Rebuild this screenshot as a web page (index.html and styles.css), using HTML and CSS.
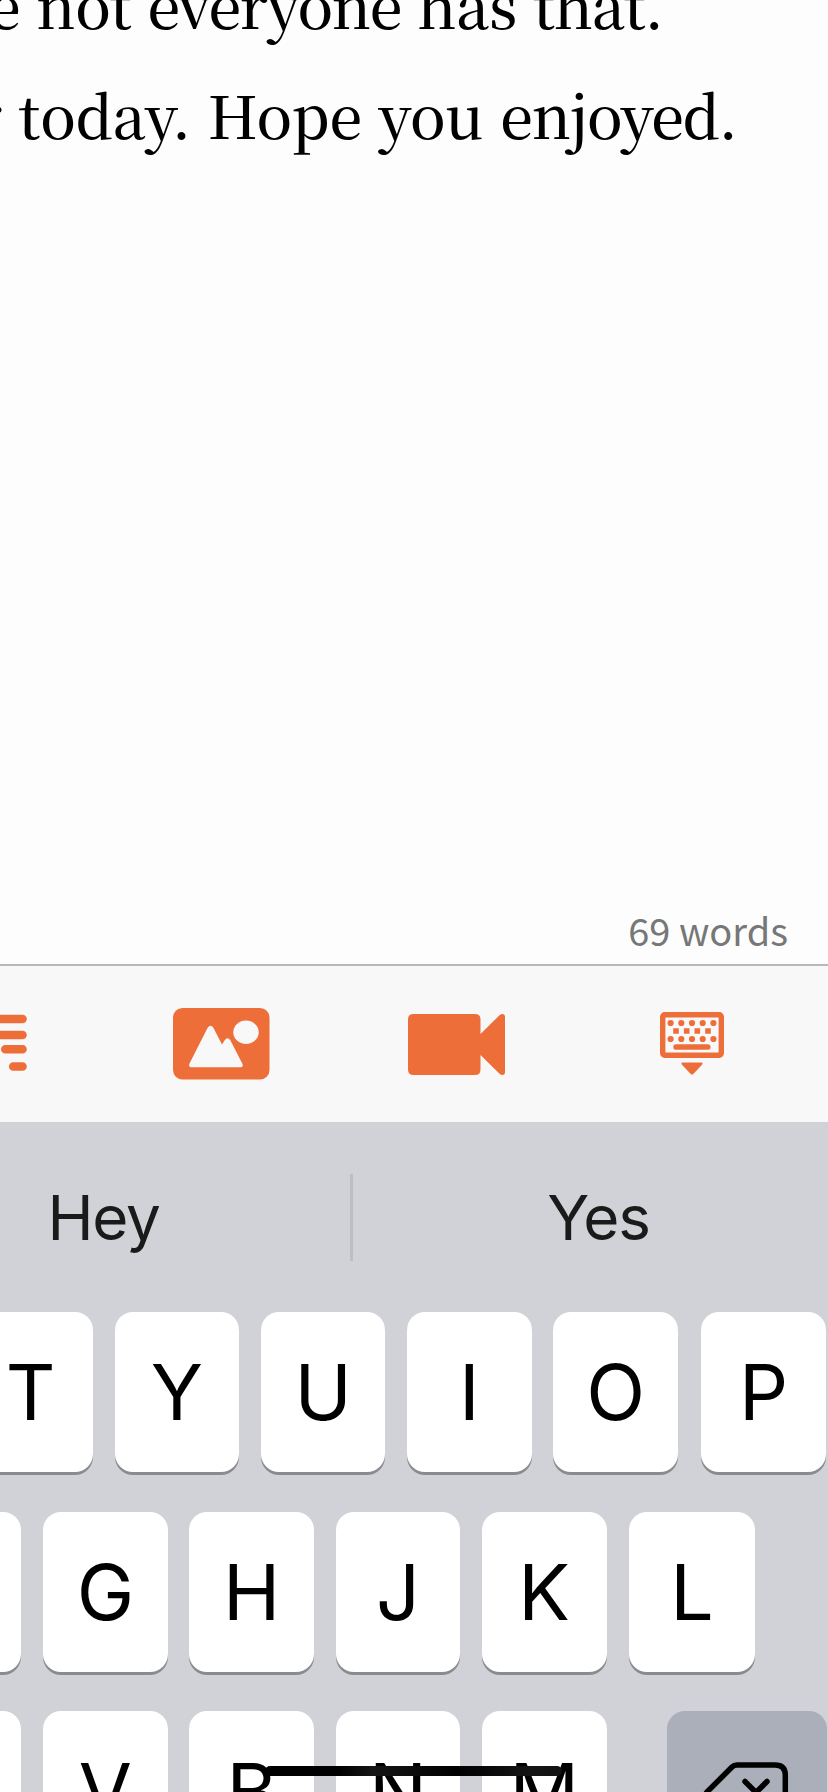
FILE: index.html
```html
<!DOCTYPE html>
<html lang="en">
<head>
<meta charset="utf-8">
<title>Story editor</title>
<link rel="stylesheet" href="styles.css">
</head>
<body>
<div class="screen">
  <main class="editor">
    <p class="line line-first">e not <span class="snug">everyone</span> has <span class="tight">that.</span></p>
    <p class="line line-last">r today. Hope you <span class="tight">enjoyed.</span></p>
    <div class="count">69 words</div>
  </main>
  <div class="toolbar">
    <svg class="icon-align" width="28" height="60" viewBox="0 0 28 60"><path d="M-10 5H22.500M-10 21H22.500M5.300 35.300H22.500M13.200 52.500H22.500" stroke="#ee6e3a" stroke-width="8.600" stroke-linecap="round"/></svg>
    <svg class="icon-image" width="97" height="72" viewBox="0 0 97 72"><rect width="96.500" height="71.500" rx="9.500" fill="#ee6e3a"/><path d="M16.500 55.500 34.500 20q3-4.500 6 0L49 36.500l2.500-4q3-4.500 6 0L69.500 56q1 3.300-2 3.300H18.500q-3.500 0-2-3.800Z" fill="#f8f8f8"/><ellipse cx="73" cy="24.300" rx="12.700" ry="11.700" fill="#f8f8f8"/></svg>
    <svg class="icon-video" width="97" height="62" viewBox="0 0 97 62"><path d="M5.500 0H67q5.500 0 5.500 5.500V20L91.500 1.200Q93 0 94.500 0 97 0 97 3V58q0 3-2.500 3-1.500 0-3-1.200L72.500 41V55.500q0 5.500-5.500 5.500H5.500Q0 61 0 55.500V5.500Q0 0 5.500 0Z" fill="#ee6e3a"/></svg>
    <svg class="icon-keyboard" width="64" height="64" viewBox="0 0 64 64" fill="#ee6e3a"><rect x="2.700" y="2.700" width="58.600" height="40.600" rx="2" fill="none" stroke="#ee6e3a" stroke-width="5.400"/><g stroke="#ee6e3a" stroke-width="6.200" stroke-linecap="round"><path d="M10.600 11h.01M21.300 11h.01M32 11h.01M42.700 11h.01M53.400 11h.01M10.600 27h.01M21.300 27h.01M32 27h.01M42.700 27h.01M53.400 27h.01"/></g><path d="M13.200 16.200h5.600v5.600h-5.600zM23.900 16.200h5.600v5.600h-5.600zM34.500 16.200h5.600v5.600h-5.600zM45.200 16.200h5.600v5.600h-5.600z"/><rect x="13.300" y="32.200" width="37.200" height="5.600" rx="2.500"/><path d="M22.500 50.500h19q2.200.5.300 2.500l-8.500 9q-1.300 1-2.600 0l-8.500-9q-1.900-2 .3-2.500Z"/></svg>
  </div>
  <section class="keyboard">
    <div class="suggestions">
      <div class="suggestion">Hey</div>
      <div class="divider"></div>
      <div class="suggestion suggestion-last">Yes</div>
    </div>
    <div class="row row-top"><div class="key">T</div><div class="key">Y</div><div class="key">U</div><div class="key">I</div><div class="key">O</div><div class="key key-wide">P</div></div>
    <div class="row row-home"><div class="key"></div><div class="key">G</div><div class="key">H</div><div class="key">J</div><div class="key">K</div><div class="key key-wide">L</div></div>
    <div class="row row-bottom"><div class="key"></div><div class="key">V</div><div class="key">B</div><div class="key">N</div><div class="key">M</div><div class="key key-delete"><svg width="94" height="64" viewBox="0 0 94 64" fill="none" stroke="#000" stroke-width="5.500" stroke-linecap="round" stroke-linejoin="round"><path d="M37 3H75q10.300 0 10.300 10V51q0 10-10.300 10H37q-3 0-5-2L7 34q-2-2 0-4L32 5q2-2 5-2ZM45 19.500l22 22M67 19.500l-22 22"/></svg></div></div>
  </section>
  <div class="home-bar"></div>
</div>
</body>
</html>
```
FILE: styles.css
```css
* { box-sizing: border-box; }

body { margin: 0; }

.screen {
  position: relative;
  display: flex;
  flex-direction: column;
  width: 828px;
  height: 1792px;
  overflow: hidden;
  background: #d1d2d8;
}

.editor {
  display: flex;
  flex-direction: column;
  flex: none;
  height: 964px;
  overflow: hidden;
  background: #fdfdfd;
}

.line {
  flex: none;
  margin: 0;
  height: 110px;
  font: 500 59px/110px "Noto Serif CJK SC", "Liberation Serif", serif;
  white-space: pre;
  color: #000;
}

.line-first { margin-top: -51px; margin-left: -12px; letter-spacing: -0.500px; word-spacing: 1.500px; }
.line-last { margin-left: -26px; letter-spacing: -0.200px; word-spacing: 1.700px; }
.snug { letter-spacing: -1.400px; }
.tight { letter-spacing: -1.400px; }

.count {
  margin-top: auto;
  padding: 0 40px 6px 0;
  text-align: right;
  font: 38px/56px "Noto Sans CJK SC", sans-serif;
  color: #777;
}

.toolbar {
  display: flex;
  align-items: flex-start;
  flex: none;
  height: 158px;
  padding-top: 42px;
  border-top: 2px solid #b8b8ba;
  background: #f8f8f8;
}

.toolbar svg { flex: none; }
.icon-align { margin-top: 6px; }
.icon-image { margin-left: 145px; }
.icon-video { margin: 6px 0 0 138px; }
.icon-keyboard { margin: 4px 0 0 155px; }

.keyboard {
  display: flex;
  flex-direction: column;
  flex: none;
  height: 670px;
  overflow: hidden;
  font-family: Inter, sans-serif;
}

.suggestions {
  display: flex;
  flex: none;
  align-items: center;
  height: 190px;
  margin-left: -141px;
}

.suggestion {
  flex: none;
  width: 491px;
  padding: 2px 2px 0 0;
  text-align: center;
  font-size: 62px;
  line-height: 80px;
  letter-spacing: -1.300px;
  color: #1a1a1a;
}

.suggestion-last { padding-right: 0; }

.divider {
  flex: none;
  width: 3px;
  height: 87px;
  background: #bdbec2;
}

.row {
  display: flex;
  flex: none;
  gap: 21.700px;
  height: 160px;
  margin-bottom: 39.500px;
}

.row-top { margin-left: -31.700px; }
.row-home, .row-bottom { margin-left: -103.200px; }

.key {
  display: flex;
  flex: none;
  align-items: center;
  justify-content: center;
  width: 124.600px;
  height: 160px;
  border-radius: 18px;
  background: #fff;
  box-shadow: 0 3px 0 #8a8b8f;
  font-size: 77px;
  line-height: 160px;
  color: #000;
}

.key-wide { width: 125.500px; margin-left: 1px; }

.key-delete {
  width: 160px;
  margin-left: 39px;
  background: #abafba;
}

.key-delete svg { margin-top: 6px; }

.home-bar {
  position: absolute;
  left: 265px;
  top: 1766px;
  width: 297px;
  height: 10px;
  border-radius: 5px;
  background: linear-gradient(90deg, #000 25%, #151515 36%, #000 65%, #151515 90%, #111);
}
```
